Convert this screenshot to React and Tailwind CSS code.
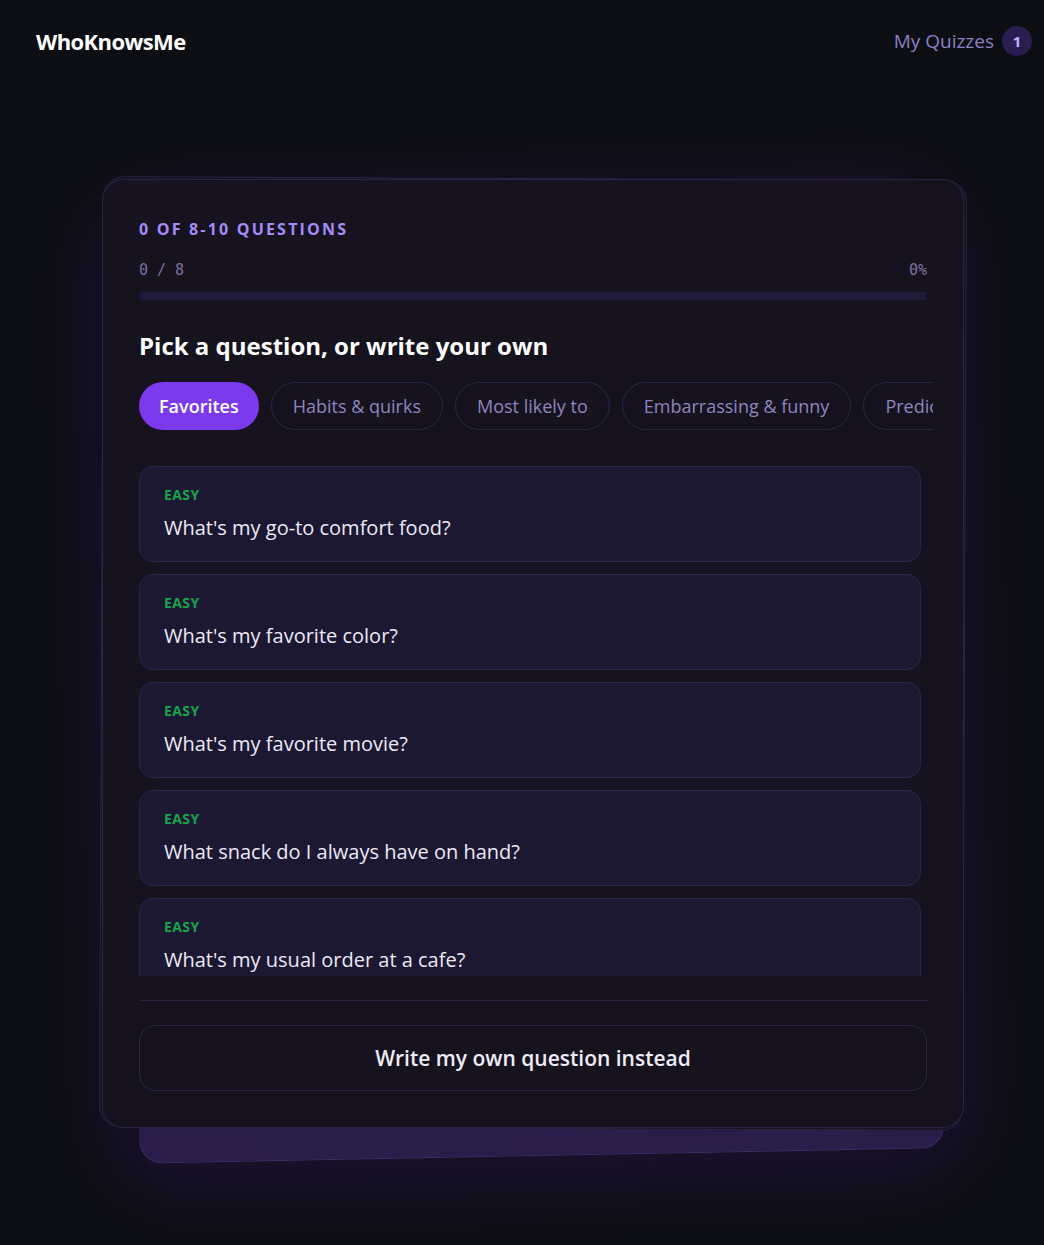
import React from 'react'

const TABS = ['Favorites', 'Habits & quirks', 'Most likely to', 'Embarrassing & funny', 'Predictions']

const QUESTIONS = [
  "What's my go-to comfort food?",
  "What's my favorite color?",
  "What's my favorite movie?",
  'What snack do I always have on hand?',
  "What's my usual order at a cafe?",
]

const sans = { fontFamily: '"Open Sans", "Noto Sans", sans-serif' }

function Header() {
  return (
    <header className="flex items-center justify-between pl-9 pr-3 h-[82px]">
      <div className="text-[22px] font-bold text-white tracking-[-0.6px]">WhoKnowsMe</div>
      <div className="flex items-center gap-2">
        <span className="text-[19px] text-[#8b80c2]">My Quizzes</span>
        <span className="w-[30px] h-[30px] rounded-full bg-[#2a1d52] text-[#c4b5fd] text-[15px] font-bold flex items-center justify-center">1</span>
      </div>
    </header>
  )
}

function QuestionCard({ text }) {
  return (
    <div className="shrink-0 h-[96px] rounded-[14px] border border-[#2a2546] bg-[#1c1831] px-6 pt-[19px]">
      <div className="text-[14px] font-bold tracking-[0.4px] text-[#16a34a] leading-[18px]">EASY</div>
      <div className="mt-[11px] text-[20px] text-[#ece9f6] leading-[26px]">{text}</div>
    </div>
  )
}

export default function App() {
  return (
    <div className="min-h-[1245px] bg-[#0d0e13] overflow-hidden" style={sans}>
      <Header />
      <div className="flex justify-center pt-[97px] pl-[22px]">
        <div className="relative w-[862px]">
          <div className="absolute left-[29px] right-[29px] top-[40px] -bottom-[28px] rounded-[22px] border border-[#3b2d66] bg-gradient-to-b from-[#2b1f4f] to-[#2a1d4a] -rotate-[1.1deg] shadow-[0_0_90px_24px_rgba(109,40,217,0.17)]" />
          <div className="absolute -inset-[1px] rounded-[22px] border border-[#2b2444] bg-[#16131f] rotate-[0.25deg]" />
          <div className="relative rounded-[22px] border border-[#2b2444] bg-[#16131f] px-9 pt-[40px] pb-9">
            <div className="text-[16px] font-bold tracking-[2.2px] text-[#a78bfa] leading-[18px]">0 OF 8-10 QUESTIONS</div>
            <div className="mt-[24px] flex justify-between text-[15px] text-[#7c709f] leading-[16px]" style={{ fontFamily: '"DejaVu Sans Mono", monospace' }}>
              <span>0 / 8</span>
              <span>0%</span>
            </div>
            <div className="mt-[14px] h-2 rounded-full bg-[#1f1a36]" />
            <h2 className="mt-[30px] text-[24px] font-bold text-white leading-[32px]">Pick a question, or write your own</h2>
            <div className="mt-[20px] mr-[-6px] flex gap-3 overflow-hidden">
              {TABS.map((t, i) => (
                <button
                  key={t}
                  className={
                    i === 0
                      ? 'shrink-0 h-12 px-[20px] rounded-full bg-[#7c3aed] text-white text-[18px] font-semibold'
                      : 'shrink-0 h-12 px-[21px] rounded-full border border-[#2d2747] text-[#8f84bd] text-[18px] font-medium'
                  }
                >
                  {t}
                </button>
              ))}
            </div>
            <div className="mt-[36px] h-[510px] overflow-hidden pr-[6px] flex flex-col gap-[12px]">
              {QUESTIONS.map(q => (
                <QuestionCard key={q} text={q} />
              ))}
            </div>
            <div className="mt-[24px] h-px bg-[#2a2440]" />
            <div className="mt-[24px] h-[66px] rounded-2xl border border-[#2d2649] flex items-center justify-center">
              <span className="text-[21px] font-semibold text-[#efecf7] leading-[28px]">Write my own question instead</span>
            </div>
          </div>
        </div>
      </div>
    </div>
  )
}
